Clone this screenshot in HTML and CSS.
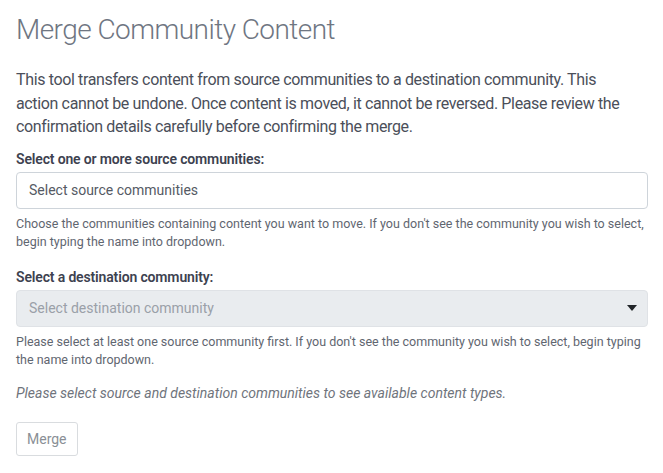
FILE: index.html
```html
<!DOCTYPE html>
<html>
<head>
<meta charset="utf-8">
<link rel="stylesheet" href="styles.css">
</head>
<body>
<main class="page">
  <h1 class="title">Merge Community Content</h1>
  <p class="intro">This tool transfers content from source communities to a destination community. This<br>action cannot be undone. Once content is moved, it cannot be reversed. Please review the confirmation details carefully before confirming the merge.</p>

  <section class="field">
    <label class="label">Select one or more source communities:</label>
    <div class="input">Select source communities</div>
    <p class="help">Choose the communities containing content you want to move. If you don't see the community you wish to select, begin typing the name into dropdown.</p>
  </section>

  <section class="field">
    <label class="label">Select a destination community:</label>
    <div class="input disabled">
      <span>Select destination community</span>
      <svg class="caret" width="10" height="6" viewBox="0 0 10 6"><path d="M0 0h10L5 6z" fill="#212529"/></svg>
    </div>
    <p class="help">Please select at least one source community first. If you don't see the community you wish to select, begin typing the name into dropdown.</p>
  </section>

  <p class="note">Please select source and destination communities to see available content types.</p>

  <button class="btn" type="button">Merge</button>
</main>
</body>
</html>
```

FILE: styles.css
```css
html, body { margin: 0; padding: 0; background: #fff; }
body { font-family: Roboto, "Liberation Sans", sans-serif; color: #4b4f58; }
.page { padding: 12px 15px 0 16px; display: flex; flex-direction: column; align-items: flex-start; }
.title { margin: 0; font-size: 28px; font-weight: 300; color: #6f7682; line-height: 36px; letter-spacing: -0.55px; }
.intro { margin: 20px 0 0; font-size: 16px; line-height: 23.5px; color: #4b4f5a; width: 634px; letter-spacing: -0.36px; }
.field { width: 632px; margin-top: 10px; }
.field + .field { margin-top: 16px; }
.label { display: block; font-size: 14px; font-weight: 600; color: #3d4250; line-height: 20px; margin-bottom: 3px; letter-spacing: -0.15px; }
.input { box-sizing: border-box; height: 37px; border: 1px solid #ced4da; border-radius: 4px; display: flex; align-items: center; justify-content: space-between; padding: 0 12px 0 12px; font-size: 14px; color: #555a64; }
.input.disabled { background: #e9ecef; color: #9aa0a8; border-color: #dfe2e6; padding-right: 10px; }
.help { margin: 6px 0 0; font-size: 12.5px; line-height: 18px; color: #5f6670; }
.note { margin: 14px 0 0; font-size: 14px; font-style: italic; color: #6f747c; line-height: 20px; }
.btn { margin-top: 19px; height: 34px; padding: 0 10px; border: 1px solid #d9dcdf; border-radius: 3px; background: #fff; font-family: inherit; font-size: 14px; color: #8a8f96; }
```
